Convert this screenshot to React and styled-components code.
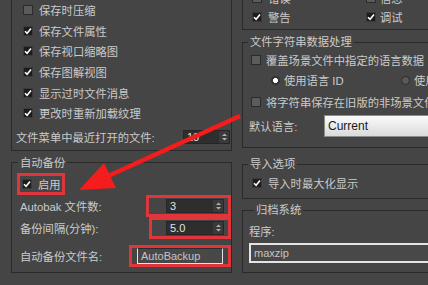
import React from 'react';
import styled, { createGlobalStyle } from 'styled-components';

const Global = createGlobalStyle`
  html, body { margin: 0; padding: 0; background: #454545; }
  body { font-family: "Liberation Sans", "Noto Sans CJK SC", sans-serif; }
`;

const Page = styled.div`
  position: relative;
  width: 428px;
  height: 285px;
  overflow: hidden;
  box-sizing: border-box;
  background: #454545;
  display: grid;
  grid-template-columns: 221px 200px;
  column-gap: 10px;
  align-items: start;
  padding-left: 11px;
  color: #cbcbcb;
  font-size: 11.3px;
`;

const Column = styled.div`
  display: flex;
  flex-direction: column;
`;

const Group = styled.fieldset`
  margin: ${(p) => p.$mt || 0}px 0 0;
  padding: ${(p) => p.$pad || '0'};
  border: 1px solid #2a2a2a;
  border-top: ${(p) => (p.$cut ? 'none' : '1px solid #2a2a2a')};
  min-width: 0;
  box-sizing: border-box;
  display: flex;
  flex-direction: column;
  font: inherit;
`;

const Legend = styled.legend`
  margin-left: ${(p) => p.$ml || 5}px;
  padding: 0 2px;
  line-height: 14px;
  height: 14px;
  color: #cbcbcb;
`;

const Row = styled.div`
  display: flex;
  align-items: center;
  height: ${(p) => p.$h || 20}px;
  margin-top: ${(p) => p.$mt || 0}px;
  padding-left: ${(p) => p.$indent || 0}px;
  justify-content: ${(p) => (p.$spread ? 'space-between' : 'flex-start')};
  white-space: nowrap;
`;

const Check = styled.label`
  display: flex;
  align-items: center;
  gap: ${(p) => p.$gap || 5}px;
  width: ${(p) => (p.$w ? p.$w + 'px' : 'auto')};
  flex: none;
  white-space: nowrap;
`;

const Box = styled.span`
  width: 10px;
  height: 10px;
  box-sizing: border-box;
  border: 1px solid ${(p) => (p.$on ? '#3a3a3a' : '#2b2b2b')};
  background: ${(p) => (p.$on ? '#1c1c1c' : '#5b5b5b')};
  display: flex;
  align-items: center;
  justify-content: center;
  flex: none;
`;

const Radio = styled.span`
  width: 9px;
  height: 9px;
  box-sizing: border-box;
  border-radius: 50%;
  border: 1px solid #2b2b2b;
  background: ${(p) => (p.$on ? 'radial-gradient(circle, #ffffff 0 2.2px, #3a3a3a 2.6px)' : '#5a5a5a')};
  flex: none;
`;

const Label = styled.span`
  width: ${(p) => (p.$w ? p.$w + 'px' : 'auto')};
  flex: none;
  color: #cbcbcb;
`;

const Highlight = styled.div`
  box-sizing: border-box;
  width: ${(p) => (p.$w ? p.$w + 'px' : 'auto')};
  height: ${(p) => p.$h || 22}px;
  margin-left: ${(p) => p.$ml || 0}px;
  border: 3px solid #e0353b;
  display: flex;
  align-items: center;
  justify-content: ${(p) => (p.$end ? 'flex-end' : 'flex-start')};
  padding: 0 ${(p) => p.$pr || 0}px 0 ${(p) => p.$pl || 0}px;
`;

const Spin = styled.div`
  display: flex;
  width: ${(p) => p.$w}px;
  height: 14px;
  box-sizing: border-box;
  border: 1px solid #262626;
  background: #2e2e2e;
  margin-right: ${(p) => p.$mr || 0}px;
  flex: none;
`;

const SpinValue = styled.span`
  flex: 1;
  padding-left: 3px;
  font-family: "Liberation Sans", sans-serif;
  font-size: 11px;
  line-height: 12px;
  color: #e2e2e2;
`;

const SpinButtons = styled.span`
  width: 10px;
  display: flex;
  align-items: center;
  justify-content: center;
  background: #3a3a3a;
`;

const TextInput = styled.div`
  box-sizing: border-box;
  width: ${(p) => (p.$w ? p.$w + 'px' : '100%')};
  height: ${(p) => p.$h || 16}px;
  margin-top: ${(p) => p.$mt || 0}px;
  margin-left: ${(p) => p.$ml || 0}px;
  border: ${(p) => p.$bw || 1}px solid #e4e4e4;
  border-top-color: ${(p) => p.$top || '#e4e4e4'};
  background: #484848;
  color: #c4c4c4;
  font-family: "Liberation Sans", sans-serif;
  font-size: 11px;
  display: flex;
  align-items: center;
  padding-left: 3px;
  flex: none;
`;

const Dropdown = styled.div`
  box-sizing: border-box;
  width: 130px;
  height: 22px;
  border: 1px solid #8c8c8c;
  background: linear-gradient(#fbfbfb, #dadada);
  color: #1a1a1a;
  font-family: "Liberation Sans", sans-serif;
  font-size: 12px;
  display: flex;
  align-items: center;
  padding-left: 3px;
  flex: none;
`;

const Overlay = styled.svg`
  position: absolute;
  left: 0;
  top: 0;
  pointer-events: none;
`;

const Tick = () => (
  <svg width="8" height="8" viewBox="0 0 8 8">
    <path d="M1 4.2 L3.1 6.3 L7 1.6" fill="none" stroke="#ffffff" strokeWidth="1.6" />
  </svg>
);

const CheckBox = ({ on, children, gap, w }) => (
  <Check $gap={gap} $w={w}>
    <Box $on={on}>{on && <Tick />}</Box>
    <span>{children}</span>
  </Check>
);

const SpinArrows = () => (
  <svg width="7" height="10" viewBox="0 0 7 10">
    <path d="M1 4 L3.5 1.5 L6 4 Z M1 6 L3.5 8.5 L6 6 Z" fill="#b0b0b0" />
  </svg>
);

const Spinner = ({ value, w, mr }) => (
  <Spin $w={w} $mr={mr}>
    <SpinValue>{value}</SpinValue>
    <SpinButtons>
      <SpinArrows />
    </SpinButtons>
  </Spin>
);

export default function App() {
  return (
    <>
      <Global />
      <Page>
        <Column>
          <Group $cut $pad="0 0 3px 4px">
            <Row $h={20.6} $indent={7}><CheckBox gap={6}>保存时压缩</CheckBox></Row>
            <Row $h={20.6} $indent={7}><CheckBox on gap={6}>保存文件属性</CheckBox></Row>
            <Row $h={20.6} $indent={7}><CheckBox on gap={6}>保存视口缩略图</CheckBox></Row>
            <Row $h={20.6} $indent={7}><CheckBox on gap={6}>保存图解视图</CheckBox></Row>
            <Row $h={20.6} $indent={7}><CheckBox on gap={6}>显示过时文件消息</CheckBox></Row>
            <Row $h={20.6} $indent={7}><CheckBox on gap={6}>更改时重新加载纹理</CheckBox></Row>
            <Row $h={20} $mt={3.4} $spread>
              <Label>文件菜单中最近打开的文件:</Label>
              <Spinner value="10" w={47} mr={1} />
            </Row>
          </Group>

          <Group $mt={5} $pad="0 0 5px 0">
            <Legend $ml={6}>自动备份</Legend>
            <Row $h={22} $mt={3}>
              <Highlight $w={48} $ml={5} $pl={2}>
                <CheckBox on gap={6}>启用</CheckBox>
              </Highlight>
            </Row>
            <Row $h={22} $spread $indent={8}>
              <Label>Autobak 文件数:</Label>
              <Highlight $w={85} $end $pr={4}>
                <Spinner value="3" w={58} />
              </Highlight>
            </Row>
            <Row $h={22} $spread $indent={8}>
              <Label>备份间隔(分钟):</Label>
              <Highlight $w={82} $end $pr={4}>
                <Spinner value="5.0" w={58} />
              </Highlight>
            </Row>
            <Row $h={22} $mt={6} $spread $indent={8}>
              <Label>自动备份文件名:</Label>
              <Highlight $w={102} $end $pr={5}>
                <TextInput $w={86} $h={16} $bw={1} $top="#2c2c2c">AutoBackup</TextInput>
              </Highlight>
            </Row>
          </Group>
        </Column>

        <Column>
          <Group $cut $mt={-12} $pad="0 0 3px 0">
            <Row $h={19} $indent={9}>
              <CheckBox w={114} gap={6}>错误</CheckBox>
              <CheckBox gap={4}>信息</CheckBox>
            </Row>
            <Row $h={19} $indent={9}>
              <CheckBox on w={114} gap={6}>警告</CheckBox>
              <CheckBox on gap={4}>调试</CheckBox>
            </Row>
          </Group>

          <Group $mt={5} $pad="0 0 10px 0">
            <Legend>文件字符串数据处理</Legend>
            <Row $h={20} $mt={1} $indent={8}>
              <CheckBox>覆盖场景文件中指定的语言数据</CheckBox>
            </Row>
            <Row $h={20} $indent={28}>
              <Check $gap={4} $w={130}>
                <Radio $on />
                <span>使用语言 ID</span>
              </Check>
              <Check $gap={4}>
                <Radio />
                <span>使用代码页</span>
              </Check>
            </Row>
            <Row $h={20} $mt={2} $indent={8}>
              <CheckBox>将字符串保存在旧版的非场景文件中</CheckBox>
            </Row>
            <Row $h={22} $mt={3} $indent={6}>
              <Label $w={75}>默认语言:</Label>
              <Dropdown>Current</Dropdown>
            </Row>
          </Group>

          <Group $mt={9} $pad="0 0 5px 0">
            <Legend>导入选项</Legend>
            <Row $h={20} $mt={2} $indent={9}>
              <CheckBox on gap={6}>导入时最大化显示</CheckBox>
            </Row>
          </Group>

          <Group $mt={4} $pad="0 0 9px 6px">
            <Legend>归档系统</Legend>
            <Row $h={20} $mt={4}>
              <Label>程序:</Label>
            </Row>
            <TextInput $h={20} $mt={2} $bw={2} $w={200}>maxzip</TextInput>
          </Group>
        </Column>

        <Overlay width="428" height="285" viewBox="0 0 428 285">
          <line x1="240" y1="116" x2="106" y2="177" stroke="#f41c1c" strokeWidth="4.5" />
          <polygon points="79,190 116,188 104,163" fill="#f41c1c" />
        </Overlay>
      </Page>
    </>
  );
}
